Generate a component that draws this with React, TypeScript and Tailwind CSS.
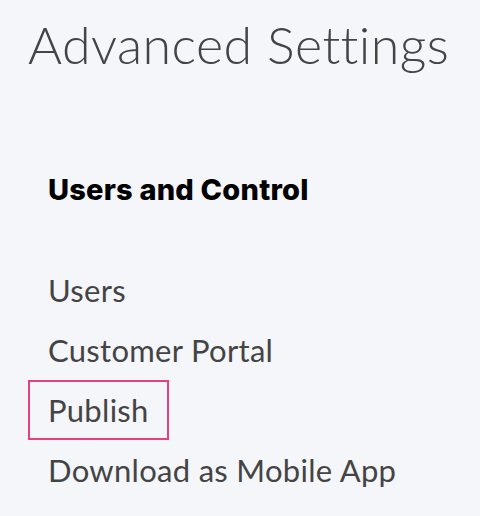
export default function App() {
  const items = ['Users', 'Customer Portal', 'Publish', 'Download as Mobile App'];
  return (
    <div
      className="w-[480px] h-[516px] overflow-hidden bg-[#f4f6fa] text-[#444]"
      style={{ fontFamily: 'Lato, "Open Sans", sans-serif' }}
    >
      <h1 className="pl-[28px] pt-[14px] text-[52px] font-light leading-[60px] tracking-[0.4px]">
        Advanced Settings
      </h1>

      <div className="pl-[48px] pt-[101px]">
        <h2
          className="text-[29px] font-extrabold leading-[30px] tracking-[0.2px] text-black"
          style={{ fontFamily: 'Inter, Lato, sans-serif' }}
        >
          Users and Control
        </h2>
      </div>

      <ul className="pt-[55px] pl-[28px]">
        {items.map((item) => (
          <li
            key={item}
            className={`w-fit h-[60px] flex items-center px-[18px] text-[31px] leading-none tracking-[0.3px] ${
              item === 'Publish' ? 'border-2 border-[#e8407a]' : 'border-2 border-transparent'
            }`}
          >
            {item}
          </li>
        ))}
      </ul>
    </div>
  );
}
